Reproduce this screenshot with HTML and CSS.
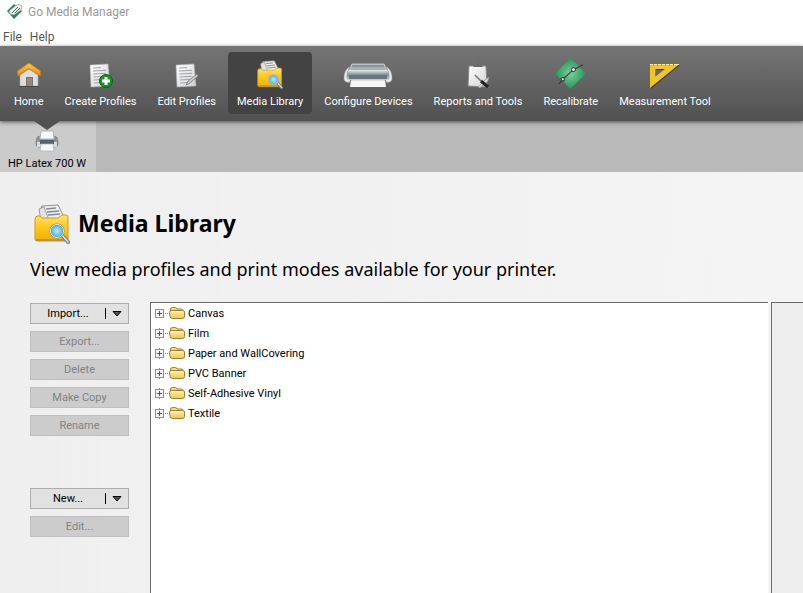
FILE: index.html
```
<!DOCTYPE html>
<html lang="en">
<head>
  <meta charset="utf-8">
  <title>Go Media Manager</title>
  <link rel="stylesheet" href="styles.css">
</head>
<body>
  <!-- shared icons -->
  <svg class="defs" aria-hidden="true">
    <defs>
      <linearGradient id="paper" x1="0" y1="0" x2="1" y2="1">
        <stop offset="0" stop-color="#fff"/><stop offset="1" stop-color="#cdd0d2"/>
      </linearGradient>
      <linearGradient id="gold" x1="0" y1="0" x2="0" y2="1">
        <stop offset="0" stop-color="#ffe27a"/><stop offset=".45" stop-color="#fdc91c"/><stop offset="1" stop-color="#f5ae06"/>
      </linearGradient>
      <linearGradient id="roof" x1="0" y1="0" x2="0" y2="1">
        <stop offset="0" stop-color="#ffc93a"/><stop offset="1" stop-color="#ee8a04"/>
      </linearGradient>
      <linearGradient id="metal" x1="0" y1="0" x2="0" y2="1">
        <stop offset="0" stop-color="#e8eced"/><stop offset=".5" stop-color="#7d898c"/><stop offset="1" stop-color="#d5dadb"/>
      </linearGradient>
      <radialGradient id="green">
        <stop offset="0" stop-color="#7fcf9a"/><stop offset="1" stop-color="#23965a"/>
      </radialGradient>
      <radialGradient id="lens">
        <stop offset="0" stop-color="#b4ecf8"/><stop offset="1" stop-color="#4fb3d6"/>
      </radialGradient>
      <linearGradient id="folderFill" x1="0" y1="0" x2="0" y2="1">
        <stop offset="0" stop-color="#fff0a8"/><stop offset="1" stop-color="#ecc65a"/>
      </linearGradient>
    </defs>
    <symbol id="page" viewBox="0 0 24 26">
      <path d="M1 2 19 1 21 23 2 24Z" fill="url(#paper)" stroke="#a9adaf" stroke-width=".6"/>
      <path d="M4 5l8-.4M4 8l13-.7M4 11l13-.7M4.500 14l12-.7M4.500 17l11-.6M5 20l9-.5" stroke="#8d9296" stroke-width=".8" fill="none"/>
    </symbol>
    <symbol id="library" viewBox="0 0 36 40">
      <path d="M6 6 8 2 24 1 29 11 29 18 8 20Z" fill="#edf0f3" stroke="#8a8e94"/>
      <path d="M5 5 10 3 15 16 7 18Z" fill="#dfe3e8" stroke="#8a8e94" stroke-width=".8"/>
      <path d="M12 5l10-1M13 8l12-1M14 11l12-1" stroke="#858b94" fill="none" stroke-width="1.300"/>
      <path d="M1 15q0-3 3-3h2l2 2h16l4-3h4q2 0 2 2v22q0 2-2 2H3q-2 0-2-2Z" fill="url(#gold)" stroke="#d29b0a"/>
      <path d="M2 36h31" stroke="#a58d51" stroke-width="1.500"/>
      <path d="M28 31l6 7" stroke="#7b858c" stroke-width="4" stroke-linecap="round"/>
      <path d="M28 31l6 7" stroke="#dbe3e8" stroke-width="1.500" stroke-linecap="round"/>
      <circle cx="23" cy="27" r="6.500" fill="url(#lens)" stroke="#728f9f" stroke-width="2"/>
      <circle cx="23" cy="27" r="6.500" fill="none" stroke="#d6e9f2"/>
    </symbol>
    <symbol id="folder" viewBox="0 0 16 14">
      <path d="M1.500 10V4q-.5-2.500 2-2.500h3q1 0 1.500 1.500h4.500q1.500 0 1.500 2v5" fill="#f6d878" stroke="#a57c28"/>
      <path d="M2.500 4.500H13.500q2 0 2 1.500v4.500q0 2-2 2h-10q-2 0-2.500-2L.500 6.500q0-2 2-2Z" fill="url(#folderFill)" stroke="#a57c28"/>
      <path d="M3 5.500h10.500" stroke="#fff9d6"/>
    </symbol>
  </svg>

  <header class="titlebar">
    <svg class="logo" viewBox="0 0 18 18" aria-hidden="true">
      <path d="M8 1 16 8 8 16 1 8Z" fill="#20875a"/>
      <path d="M3 8 9 3 13 1 16 3 15 7 8 12 4 11Z" fill="#e9ecea" stroke="#8e9793" stroke-width=".7"/>
      <path d="M6 10l6-6M9 10l5-5" stroke="#59625e" fill="none"/>
    </svg>
    <span>Go Media Manager</span>
  </header>

  <nav class="menubar" aria-label="Menu">
    <button type="button">File</button>
    <button type="button">Help</button>
  </nav>

  <nav class="toolbar" aria-label="Sections">
    <button type="button" class="tool">
      <svg class="tool-icon" viewBox="0 0 24 26" aria-hidden="true">
        <path d="M3 12 12 6 21 12V23H3Z" fill="#dedede" stroke="#a8a8a8" stroke-width=".6"/>
        <path d="M9 14h7v9H9Z" fill="#77736e"/>
        <path d="M10 15h5v8h-5Z" fill="#918b84"/>
        <path d="M12 0 23.500 8V13L12 5.500.500 13V8Z" fill="url(#roof)" stroke="#d17a05" stroke-width=".5"/>
        <path d="M2 23.500h20" stroke="#484848"/>
      </svg>
      <span>Home</span>
    </button>
    <button type="button" class="tool">
      <svg class="tool-icon" viewBox="0 0 24 26" aria-hidden="true">
        <use href="#page" width="24" height="26"/>
        <circle cx="17" cy="18" r="6.500" fill="#179522" stroke="#086312"/>
        <path d="M17 14v8M13 18h8" stroke="#fff" stroke-width="3"/>
      </svg>
      <span>Create Profiles</span>
    </button>
    <button type="button" class="tool">
      <svg class="tool-icon" viewBox="0 0 24 26" aria-hidden="true">
        <use href="#page" width="24" height="26"/>
        <path d="M11 22 13 18 22 11 23 13 15 20Z" fill="#ccc" stroke="#777" stroke-width=".8"/>
      </svg>
      <span>Edit Profiles</span>
    </button>
    <button type="button" class="tool active" aria-current="page">
      <svg class="tool-icon tall" viewBox="0 0 36 40" aria-hidden="true"><use href="#library"/></svg>
      <span>Media Library</span>
    </button>
    <button type="button" class="tool">
      <svg class="tool-icon wide" viewBox="0 0 50 26" aria-hidden="true">
        <path d="M9 1H41L44 8H6Z" fill="#a9b0b3" stroke="#d5d9da" stroke-width=".8"/>
        <path d="M9 3h32" stroke="#68777c"/>
        <path d="M5 7H45L47 17H3Z" fill="url(#metal)"/>
        <path d="M6 12H44V16H6Z" fill="#67767a"/>
        <path d="M7 4Q1 6 1 16q1 4 6 3V16H4Q3 9 7 4ZM43 4q6 2 6 12-1 4-6 3v-3h3q1-7-3-12Z" fill="#e9eced" stroke="#a3a9ac" stroke-width=".6"/>
        <path d="M8 17H42L43 24H7Z" fill="#f6f6f6"/>
        <path d="M8 17h34" stroke="#bfc3c5"/>
      </svg>
      <span>Configure Devices</span>
    </button>
    <button type="button" class="tool">
      <svg class="tool-icon" viewBox="0 0 24 26" aria-hidden="true">
        <path d="M3 3H20L21 24 2 23Z" fill="url(#paper)" stroke="#888"/>
        <path d="M7 4q1-2 3-2l1-2h2l1 2q2 0 3 2Z" fill="#696969"/>
        <path d="M12 24l8-8 3-2-1 4-8 7Z" fill="#d3d7d9" stroke="#888" stroke-width=".6"/>
        <path d="M9 12l6 6" stroke="#777" stroke-width="1.500"/>
        <path d="M15 18l7 6" stroke="#222" stroke-width="3"/>
      </svg>
      <span>Reports and Tools</span>
    </button>
    <button type="button" class="tool">
      <svg class="tool-icon big" viewBox="0 0 32 32" aria-hidden="true">
        <path d="M16 0 32 16 16 32 0 16Z" fill="url(#green)"/>
        <path d="M4 27 8 22 19 12 29 7" stroke="#3b3b3b" stroke-width="1.200" fill="none"/>
        <circle cx="19" cy="12" r="2" fill="#fff" stroke="#222"/>
        <path d="M6.500 20.500h3v3h-3Z" fill="#fff" stroke="#222"/>
      </svg>
      <span>Recalibrate</span>
    </button>
    <button type="button" class="tool">
      <svg class="tool-icon medium" viewBox="0 0 30 26" aria-hidden="true">
        <path fill-rule="evenodd" d="M1 2H30L1 26ZM6 7V14L15 7Z" fill="#3d3d3d"/>
        <path fill-rule="evenodd" d="M0 1H29.500L0 25ZM5.500 6V13.500L15 6Z" fill="#f0c52b"/>
        <path d="M0 1.500h29" stroke="#ffe978"/>
        <path d="M3.500 1v2M7.500 1v2M11.500 1v2M15.500 1v2M19.500 1v2M23.500 1v2" stroke="#b8921c"/>
      </svg>
      <span>Measurement Tool</span>
    </button>
  </nav>

  <div class="devices">
    <button type="button" class="device">
      <svg class="device-icon" viewBox="0 0 24 22" aria-hidden="true">
        <path d="M6 1H18L19 9H5Z" fill="#f4f8fa" stroke="#9fa8ad" stroke-width=".8"/>
        <path d="M4 6q-3 1-3 8 0 3 3 3h16q3 0 3-3 0-7-3-8v4H4Z" fill="#919ca1" stroke="#647077" stroke-width=".7"/>
        <path d="M2 12H6V17H2ZM18 12h4v5h-4Z" fill="#d5dbde"/>
        <path d="M5 10H19V14H5Z" fill="#57646b"/>
        <path d="M6 14H18L19 21H5Z" fill="#f7f8f8" stroke="#a8afb2" stroke-width=".7"/>
      </svg>
      <span>HP Latex 700 W</span>
    </button>
  </div>

  <main class="content">
    <div class="heading">
      <svg class="heading-icon" viewBox="0 0 36 40" aria-hidden="true"><use href="#library"/></svg>
      <h1>Media Library</h1>
    </div>
    <p class="intro">View media profiles and print modes available for your printer.</p>

    <div class="workspace">
      <div class="actions">
        <div class="split">
          <button type="button" class="split-main">Import...</button>
          <button type="button" class="split-arrow" aria-label="Import options"><svg viewBox="0 0 10 6" aria-hidden="true"><path d="M1 .500H9L5 5Z" fill="#555" stroke="#000"/></svg></button>
        </div>
        <button type="button" class="btn" disabled>Export...</button>
        <button type="button" class="btn" disabled>Delete</button>
        <button type="button" class="btn" disabled>Make Copy</button>
        <button type="button" class="btn" disabled>Rename</button>
        <div class="split second">
          <button type="button" class="split-main">New...</button>
          <button type="button" class="split-arrow" aria-label="New options"><svg viewBox="0 0 10 6" aria-hidden="true"><path d="M1 .500H9L5 5Z" fill="#555" stroke="#000"/></svg></button>
        </div>
        <button type="button" class="btn" disabled>Edit...</button>
      </div>

      <ul class="tree">
        <li><button type="button" class="expand" aria-label="Expand Canvas"></button><svg class="folder" aria-hidden="true"><use href="#folder"/></svg><span>Canvas</span></li>
        <li><button type="button" class="expand" aria-label="Expand Film"></button><svg class="folder" aria-hidden="true"><use href="#folder"/></svg><span>Film</span></li>
        <li><button type="button" class="expand" aria-label="Expand Paper and WallCovering"></button><svg class="folder" aria-hidden="true"><use href="#folder"/></svg><span>Paper and WallCovering</span></li>
        <li><button type="button" class="expand" aria-label="Expand PVC Banner"></button><svg class="folder" aria-hidden="true"><use href="#folder"/></svg><span>PVC Banner</span></li>
        <li><button type="button" class="expand" aria-label="Expand Self-Adhesive Vinyl"></button><svg class="folder" aria-hidden="true"><use href="#folder"/></svg><span>Self-Adhesive Vinyl</span></li>
        <li><button type="button" class="expand" aria-label="Expand Textile"></button><svg class="folder" aria-hidden="true"><use href="#folder"/></svg><span>Textile</span></li>
      </ul>

      <div class="details"></div>
    </div>
  </main>
</body>
</html>
```
FILE: styles.css
```
* {
  box-sizing: border-box;
}

body {
  display: flex;
  flex-direction: column;
  min-height: 100vh;
  margin: 0;
  background: #fff;
  color: #000;
  font-family: Tahoma, Roboto, sans-serif;
  font-size: 11px;
  line-height: 16px;
}

button {
  margin: 0;
  padding: 0;
  border: none;
  background: none;
  color: inherit;
  font: inherit;
}

svg {
  display: block;
}

.defs {
  position: absolute;
  width: 0;
  height: 0;
}

/* title and menu */
.titlebar {
  display: flex;
  align-items: center;
  gap: 4px;
  height: 24px;
  padding-left: 6px;
  color: #999;
  font-size: 12px;
}

.logo {
  width: 18px;
  height: 18px;
}

.menubar {
  display: flex;
  align-items: center;
  gap: 8px;
  height: 22px;
  padding: 4px 3px 0;
  color: #555;
  font-size: 12px;
}

/* toolbar */
.toolbar {
  position: relative;
  display: flex;
  align-items: flex-start;
  gap: 3px;
  height: 75px;
  padding: 6px 5px;
  background: linear-gradient(#757575, #515151);
  box-shadow: 0 1px 4px rgba(0, 0, 0, 0.6);
  color: #fff;
}

/* pointer to the selected device */
.toolbar::after {
  content: "";
  position: absolute;
  top: 100%;
  left: 34px;
  border: 13px solid transparent;
  border-top: 9px solid #515151;
  border-bottom: none;
}

.tool {
  display: flex;
  flex-direction: column;
  align-items: center;
  justify-content: flex-end;
  height: 62px;
  padding: 0 9px 4px;
  border-radius: 4px;
  white-space: nowrap;
}

.tool.active {
  background: #434343;
}

.tool-icon {
  width: 24px;
  height: 26px;
  margin-bottom: 5px;
}

.tool-icon.tall {
  width: 26px;
  height: 29px;
}

.tool-icon.wide {
  width: 50px;
}

.tool-icon.medium {
  width: 30px;
}

.tool-icon.big {
  width: 31px;
  height: 31px;
}

.devices {
  display: flex;
  height: 51px;
  background: #b9b9b9;
}

.device {
  display: flex;
  flex-direction: column;
  align-items: center;
  justify-content: flex-end;
  min-width: 96px;
  padding: 0 10px 0 8px;
  background: #cbcbcb;
}

.device-icon {
  width: 24px;
  height: 22px;
  margin-bottom: 4px;
}

/* content */
.content {
  display: flex;
  flex: 1;
  flex-direction: column;
  padding: 30px 0 0 30px;
  background: linear-gradient(90deg, #efefef, #f4f4f4);
}

.heading {
  display: flex;
  align-items: center;
  gap: 8px;
  height: 44px;
  padding-left: 4px;
}

.heading-icon {
  width: 36px;
  height: 40px;
}

h1 {
  margin: 0;
  padding-bottom: 2px;
  font-family: Tahoma, "Noto Sans", sans-serif;
  font-size: 23px;
  line-height: 32px;
}

.intro {
  margin: 11px 0 21px;
  font-family: Tahoma, "Noto Sans", sans-serif;
  font-size: 18px;
  line-height: 24px;
}

.workspace {
  display: flex;
  flex: 1;
}

.actions {
  display: flex;
  flex: none;
  flex-direction: column;
  gap: 7px;
  width: 99px;
  margin: 1px 21px 0 0;
}

.btn,
.split {
  height: 21px;
  border: 1px solid #adadad;
  background: #e1e1e1;
}

.btn:disabled {
  border-color: #bfbfbf;
  background: #ccc;
  color: #838383;
}

.split {
  display: flex;
  align-items: center;
}

.split.second {
  margin-top: 45px;
}

.split-main {
  flex: 1;
}

.split-arrow {
  width: 23px;
  height: 11px;
  padding-left: 6px;
  border-left: 1px solid #000;
}

.split-arrow svg {
  width: 10px;
  height: 6px;
}

.tree {
  flex: 1;
  margin: 0;
  padding: 0 4px;
  border: solid #696969;
  border-width: 1px 0 0 1px;
  background: #fff;
  list-style: none;
}

.tree li {
  display: flex;
  align-items: center;
  height: 20px;
  background: repeating-linear-gradient(90deg, #888 0 1px, #fff 1px 2px) 10px 10px / 5px 1px no-repeat;
}

.tree span {
  padding-top: 2px;
}

.expand {
  width: 9px;
  height: 9px;
  border: 1px solid #919191;
  background:
    linear-gradient(#3a55a5, #3a55a5) center / 5px 1px no-repeat,
    linear-gradient(#3a55a5, #3a55a5) center / 1px 5px no-repeat,
    #f2f2f2;
}

/* dotted line down to the next folder */
.tree li:not(:last-child) .expand::after {
  content: "";
  display: block;
  height: 11px;
  margin: 18px 0 0 3px;
  border-left: 1px dotted #888;
}

.folder {
  width: 16px;
  height: 14px;
  margin: 0 3px 0 5px;
}

.details {
  flex: none;
  width: 32px;
  margin-left: 3px;
  border: solid #696969;
  border-width: 1px 0 0 1px;
  background: #eee;
}
```
